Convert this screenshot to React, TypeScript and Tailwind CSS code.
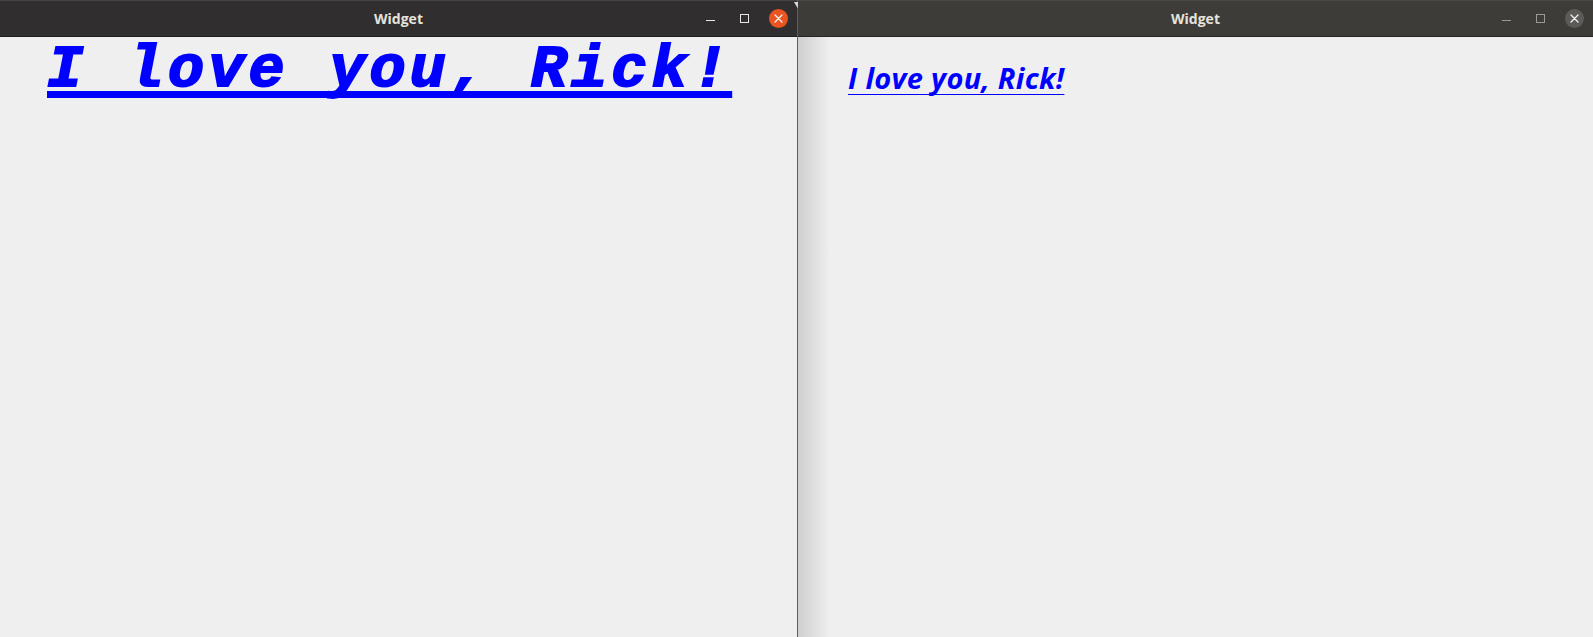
function TitleBar({ active }: { active: boolean }) {
    return (
        <div
            className={`relative flex h-[37px] items-center justify-center border-t border-b ${
                active ? "bg-[#302e2e] border-t-[#454343] border-b-[#1e1d1d]" : "bg-[#3d3c39] border-t-[#4a4946] border-b-[#262523]"
            }`}
        >
            <span className="font-['Open_Sans','Noto_Sans',sans-serif] text-[14px] font-bold text-[#e6e3dd]">
                Widget
            </span>
            <div className="absolute right-[9px] top-0 flex h-full items-center gap-[20px]">
                <div className={`mt-[4px] h-[1px] w-[9px] ${active ? "bg-[#e8e8e8]" : "bg-[#9c9a96]"}`} />
                <div className={`ml-[5px] h-[9px] w-[9px] border ${active ? "border-[#e8e8e8]" : "border-[#9c9a96]"}`} />
                <div
                    className={`flex h-[19px] w-[19px] items-center justify-center rounded-full ${
                        active ? "bg-[#e95420]" : "bg-[#5c5b58]"
                    }`}
                >
                    <svg width="9" height="9" viewBox="0 0 9 9">
                        <path d="M1 1 L8 8 M8 1 L1 8" stroke="#f4f4f4" strokeWidth="1.3" strokeLinecap="round" />
                    </svg>
                </div>
            </div>
        </div>
    );
}

export default function App() {
    return (
        <div className="flex h-[637px] w-[1593px] overflow-hidden bg-[#efefef]">
            <section className="flex w-[797px] flex-col">
                <TitleBar active={true} />
                <main className="flex-1 bg-[#efefef] pl-[47px]">
                    <h1 className="mt-[3px] font-['Liberation_Mono','Courier_New',monospace] text-[60px] font-bold italic leading-[60px] tracking-[4.3px] text-[#0000ff] underline decoration-[7px] underline-offset-[5px] [text-decoration-skip-ink:none] [-webkit-text-stroke:2px_#0000ff]">
                        I love you, Rick!
                    </h1>
                </main>
            </section>

            <div className="relative w-[1px] bg-[#5e5e5e]">
                <svg className="absolute left-[-3px] top-[2px]" width="7" height="6" viewBox="0 0 7 6">
                    <path d="M0 0 L7 0 L3.5 6 Z" fill="#d8d8d8" />
                </svg>
            </div>

            <section className="flex flex-1 flex-col">
                <TitleBar active={false} />
                <main className="flex-1 bg-gradient-to-r from-[#cfcfcf] via-[#efefef] via-[4%] to-[#efefef] pl-[50px] pt-[24px]">
                    <h2 className="font-['Open_Sans','Noto_Sans',sans-serif] text-[29px] font-bold italic leading-[34px] tracking-[0.3px] text-[#0000ff] underline decoration-[1px] underline-offset-[5px] [text-decoration-skip-ink:none]">
                        I love you, Rick!
                    </h2>
                </main>
            </section>
        </div>
    );
}
